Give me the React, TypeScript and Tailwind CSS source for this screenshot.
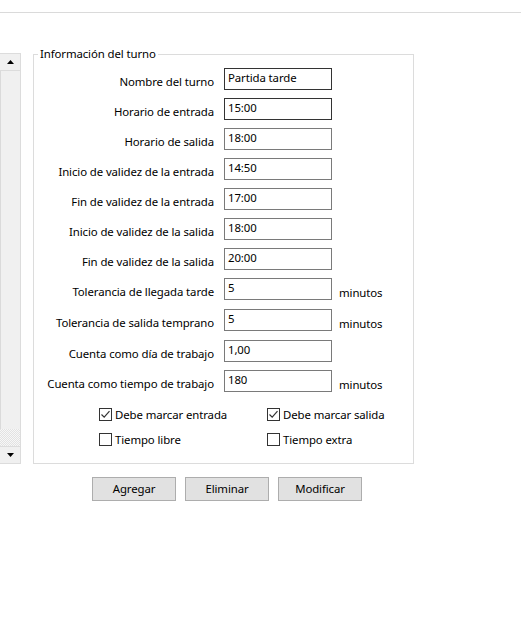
const font = "font-['Noto_Sans','Open_Sans',sans-serif]";

type Row = { label: string; value: string; unit?: boolean; dark?: boolean };

const rows: Row[] = [
    {label: "Nombre del turno", value: "Partida tarde", dark: true},
    {label: "Horario de entrada", value: "15:00", dark: true},
    {label: "Horario de salida", value: "18:00"},
    {label: "Inicio de validez de la entrada", value: "14:50"},
    {label: "Fin de validez de la entrada", value: "17:00"},
    {label: "Inicio de validez de la salida", value: "18:00"},
    {label: "Fin de validez de la salida", value: "20:00"},
    {label: "Tolerancia de llegada tarde", value: "5", unit: true},
    {label: "Tolerancia de salida temprano", value: "5", unit: true},
    {label: "Cuenta como día de trabajo", value: "1,00"},
    {label: "Cuenta como tiempo de trabajo", value: "180", unit: true},
];

function Check({checked, label}: {checked: boolean; label: string}) {
    return (
        <div className="flex items-center h-[13px]">
            <div className="w-[13px] h-[13px] border border-[#333333] bg-white flex items-center justify-center">
                {checked && (
                    <svg width="11" height="11" viewBox="0 0 11 11">
                        <path d="M1.5 5.5 L4.2 8.2 L9.5 2.2" fill="none" stroke="#333333" strokeWidth="1.2"/>
                    </svg>
                )}
            </div>
            <span className="ml-[3px] whitespace-nowrap">{label}</span>
        </div>
    );
}

function Arrow({up}: {up: boolean}) {
    return (
        <svg width="7" height="4" viewBox="0 0 7 4">
            <path d={up ? "M0 4 L3.5 0 L7 4 Z" : "M0 0 L3.5 4 L7 0 Z"} fill="#000"/>
        </svg>
    );
}

export default function App() {
    return (
        <div className={`${font} w-[521px] h-[620px] bg-white overflow-hidden text-[11.4px] tracking-[-0.1px] leading-[16px] text-black`}>
            <div className="pt-[12px]">
                <div className="h-px bg-[#dadada] w-full"></div>
            </div>
            <div className="flex mt-[40px]">
                {/* scrollbar of the list on the left */}
                <div className="w-[21px] h-[411px] flex flex-col border-t border-r border-b border-[#dcdcdc] bg-[#f0f0f0]">
                    <div className="h-[17px] border-b border-[#dcdcdc] flex items-center justify-center">
                        <Arrow up={true}/>
                    </div>
                    <div className="flex-1 border-l border-[#dadada] bg-[#f0f0f0]"></div>
                    <div className="h-[17px] bg-[repeating-conic-gradient(#f7f7f7_0_25%,#e2e2e2_0_50%)] bg-[length:2px_2px]"></div>
                    <div className="h-[17px] border-t border-[#dcdcdc] flex items-center justify-center">
                        <Arrow up={false}/>
                    </div>
                </div>

                <div className="ml-[12px] flex flex-col">
                    <fieldset className="w-[381px] h-[418px] border border-[#dcdcdc] -mt-[7px]">
                        <legend className="ml-[4px] px-[2px]">Información del turno</legend>
                        <div className="flex flex-col gap-[8px] mt-[6px]">
                            {rows.map((r) => (
                                <div key={r.label} className="flex items-start">
                                    <div className="w-[180px] text-right mt-[6px] whitespace-nowrap">{r.label}</div>
                                    <div className={`ml-[10px] w-[108px] h-[22px] border ${r.dark ? "border-[#333333]" : "border-[#7a7a7a]"} pl-[3px] pt-[1px]`}>
                                        {r.value}
                                    </div>
                                    {r.unit && <div className="ml-[7px] mt-[7px]">minutos</div>}
                                </div>
                            ))}
                        </div>
                        <div className="grid grid-cols-[168px_1fr] gap-y-[12px] ml-[65px] mt-[15px]">
                            <Check checked={true} label="Debe marcar entrada"/>
                            <Check checked={true} label="Debe marcar salida"/>
                            <Check checked={false} label="Tiempo libre"/>
                            <Check checked={false} label="Tiempo extra"/>
                        </div>
                    </fieldset>
                    <div className="flex gap-[9px] ml-[59px] mt-[13px]">
                        {["Agregar", "Eliminar", "Modificar"].map((b) => (
                            <button key={b} className="w-[84px] h-[24px] bg-[#e1e1e1] border border-[#adadad]">
                                {b}
                            </button>
                        ))}
                    </div>
                </div>
            </div>
        </div>
    );
}
